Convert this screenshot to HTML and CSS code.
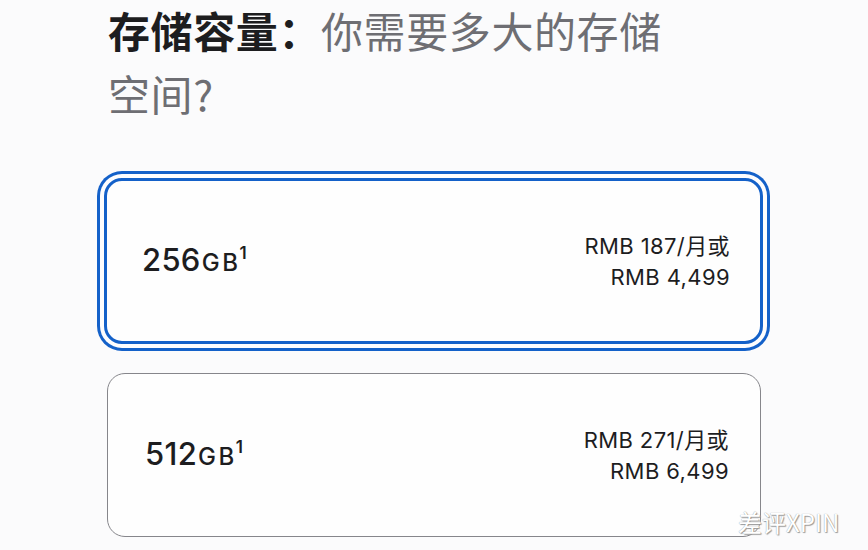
FILE: index.html
```html
<!DOCTYPE html>
<html lang="zh-CN">
<head>
<meta charset="utf-8">
<link rel="stylesheet" href="styles.css">
</head>
<body>
<div class="page">
  <h1 class="title"><span class="strong">存储容量：</span>你需要多大的存储空间?</h1>
  <div class="options">
    <div class="card selected">
      <div class="cap"><span class="num">256</span><span class="unit">GB</span><sup class="fn">1</sup></div>
      <div class="price"><div>RMB 187/月或</div><div>RMB 4,499</div></div>
    </div>
    <div class="card">
      <div class="cap"><span class="num">512</span><span class="unit">GB</span><sup class="fn">1</sup></div>
      <div class="price"><div>RMB 271/月或</div><div>RMB 6,499</div></div>
    </div>
  </div>
  <div class="watermark">差评XPIN</div>
</div>
</body>
</html>
```
FILE: styles.css
```css
html, body {
  margin: 0;
  padding: 0;
  background: #fbfbfc;
}
.page {
  position: relative;
  width: 868px;
  height: 550px;
  overflow: hidden;
  font-family: Inter, "Noto Sans CJK SC", sans-serif;
  color: #1d1d1f;
}
.title {
  margin: -2px 0 0;
  padding: 0 190px 0 108px;
  font-family: "Noto Sans CJK SC", sans-serif;
  font-size: 42px;
  line-height: 63px;
  letter-spacing: 0.6px;
  font-weight: 400;
  color: #6e6e73;
}
.strong {
  color: #1d1d1f;
  font-weight: 700;
}
.options {
  display: flex;
  flex-direction: column;
  gap: 29px;
  margin-top: 54px;
  padding-left: 104px;
  width: 659px;
}
.card {
  box-sizing: border-box;
  height: 166px;
  border: 1px solid #86868b;
  border-radius: 18px;
  background: #fefefe;
  display: flex;
  align-items: center;
  justify-content: space-between;
  padding: 0 31px 0 35px;
}
.card + .card {
  height: 164px;
  margin: 0 2px 0 3px;
}
.card.selected {
  border: 3px solid #1461c9;
  box-shadow: 0 0 0 4px #fdfdfe, 0 0 0 7px #1461c9;
  padding: 0 30px 0 33px;
}
.cap {
  display: flex;
  align-items: baseline;
  margin-top: -4px;
  font-weight: 500;
  padding-left: 2px;
}
.num {
  font-size: 31px;
  letter-spacing: 0.3px;
}
.unit {
  font-size: 24px;
  letter-spacing: 2.5px;
  margin-left: 1px;
}
.fn {
  font-size: 17px;
  font-weight: 600;
  align-self: flex-start;
  margin-left: -1px;
  line-height: 1;
  margin-top: 4px;
}
.price {
  text-align: right;
  font-size: 22px;
  line-height: 31px;
  letter-spacing: 0.4px;
  color: #1d1d1f;
  margin-top: 2px;
}
.watermark {
  position: absolute;
  left: 738px;
  top: 504px;
  font-family: "Noto Sans CJK SC", sans-serif;
  font-size: 24px;
  color: #ffffff;
  text-shadow: 0 0 1px #8a8a8a, 1px 1px 1px #9a9a9a;
}
```
